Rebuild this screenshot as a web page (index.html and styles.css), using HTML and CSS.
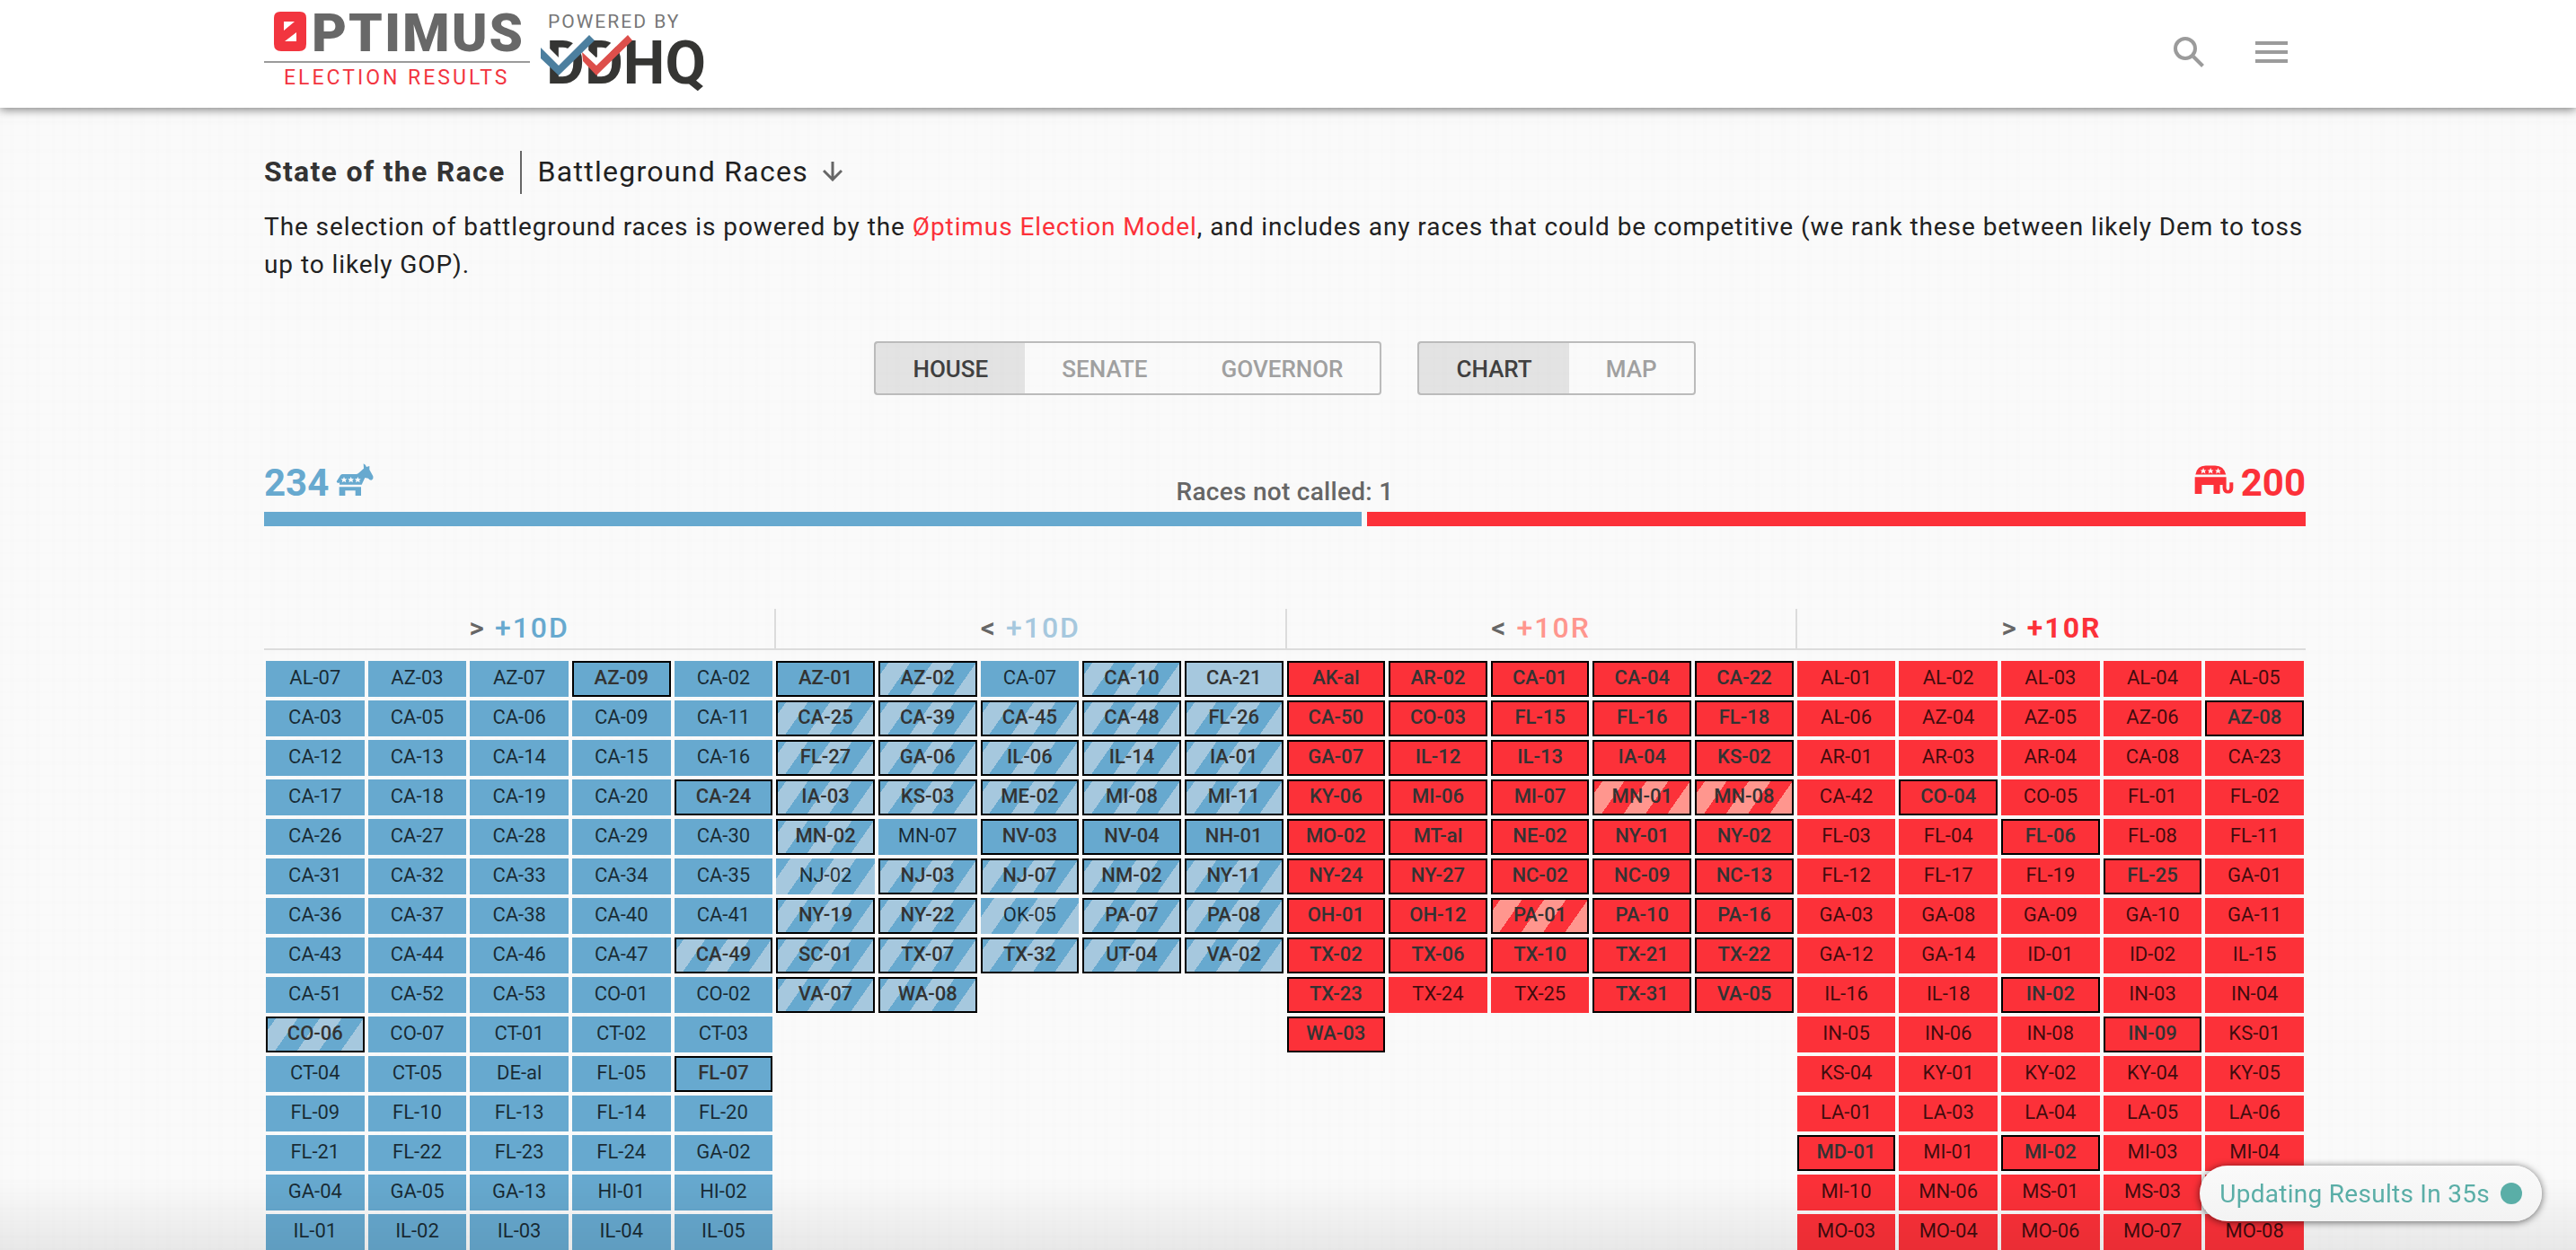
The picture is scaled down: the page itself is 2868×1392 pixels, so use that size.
FILE: index.html
```html
<!DOCTYPE html>
<html lang="en">
<head>
  <meta charset="utf-8">
  <meta name="viewport" content="width=device-width, initial-scale=1">
  <title>Optimus Election Results</title>
  <link rel="stylesheet" href="styles.css">
</head>
<body>
  <header class="site-header">
    <a class="logo" href="#" aria-label="Optimus election results, powered by DDHQ">
      <svg width="492" height="120" viewBox="0 0 492 120">
        <path class="logo-red" fill-rule="evenodd" d="M19 13h22q7 0 7 7v29q0 8-8 8H20q-8 0-8-8V20q0-7 7-7zM23 24v10l12-10zM37 36v10H24z"/>
        <text class="logo-word" x="54" y="57">PTIMUS</text>
        <path class="logo-rule" d="M1 69h296"/>
        <text class="logo-sub" x="23" y="94">ELECTION RESULTS</text>
        <text class="logo-powered" x="317" y="31">POWERED BY</text>
        <text class="logo-ddhq" x="315" y="93">DDHQ</text>
        <path class="check-gap" d="M309 49l20 20 34-34"/>
        <path class="check-gap" d="M357 56l14 13 34-34"/>
        <path class="check-red" d="M355 58l16 15 35-34 5 6-40 39-15-16z"/>
        <path class="check-blue" d="M309 53l20 20 34-34 6 6-40 39-20-19z"/>
      </svg>
    </a>
    <nav class="tools" aria-label="Site">
      <button class="icon-button" type="button" aria-label="Search">
        <svg width="36" height="36" viewBox="0 0 36 36"><circle cx="14" cy="14" r="11"/><path d="M23 23l10.500 10.500"/></svg>
      </button>
      <button class="icon-button" type="button" aria-label="Menu">
        <svg width="36" height="36" viewBox="0 0 36 36"><path d="M0 8h36M0 18h36M0 28h36"/></svg>
      </button>
    </nav>
  </header>

  <main class="page">
    <div class="title-row">
      <h1 class="title">State of the Race</h1>
      <button class="view-picker" type="button">Battleground Races
        <svg width="22" height="22" viewBox="0 0 22 22"><path d="M11 0v20M1 10l10 10 10-10"/></svg>
      </button>
    </div>
    <p class="intro">The selection of battleground races is powered by the <a href="#">Øptimus Election Model</a>, and includes any races that could be competitive (we rank these between likely Dem to toss up to likely GOP).</p>

    <div class="toggles">
      <div class="toggle" role="group" aria-label="Chamber">
        <button type="button" aria-pressed="true">HOUSE</button>
        <button type="button" aria-pressed="false">SENATE</button>
        <button type="button" aria-pressed="false">GOVERNOR</button>
      </div>
      <div class="toggle" role="group" aria-label="Display">
        <button type="button" aria-pressed="true">CHART</button>
        <button type="button" aria-pressed="false">MAP</button>
      </div>
    </div>

    <section aria-label="Seats">
      <div class="scores">
        <div class="score dem">234
          <svg width="42" height="36" viewBox="278 47 126 108">
            <path d="M290 118V111Q284 116 280 108L293 87Q296 83 301 83H345Q350 83 354 79L371 64 370 48Q378 52 380 59L390 56V68L402 90Q404 101 396 103 390 103 386 97L375 95 364 118zM289 126h73v29h-19v-17h-34v17h-20z"/>
            <path class="star" id="star" d="M305 92l3 7h7l-5 5 2 7-7-4-7 4 2-7-5-5h7z"/>
            <use class="star" href="#star" x="23"/><use class="star" href="#star" x="46"/>
          </svg>
        </div>
        <div class="uncalled">Races not called: 1</div>
        <div class="score rep">
          <svg width="44" height="32" viewBox="134 53 131 95">
            <path d="M138 84q5-30 34-30h31q29 0 36 30zM136 92h104v37q0 7 6 7 5 0 5-7v-19h12v19q0 18-17 18-17 0-18-18v-11h-9v30h-21v-30h-39v30h-23z"/>
            <use class="star" href="#star" x="-141" y="-30"/><use class="star" href="#star" x="-117" y="-30"/><use class="star" href="#star" x="-92" y="-30"/>
          </svg>
          200
        </div>
      </div>
      <div class="bar"><span class="bar-dem" style="flex-grow:234"></span><span class="bar-rep" style="flex-grow:200"></span></div>
    </section>

    <section class="chart" aria-label="House races">
      <div class="group"><h2 class="group-head">&gt; <span class="dem">+10D</span></h2><div class="cells" data-group="safeDem"></div></div>
      <div class="group"><h2 class="group-head">&lt; <span class="dem-light">+10D</span></h2><div class="cells" data-group="leanDem"></div></div>
      <div class="group"><h2 class="group-head">&lt; <span class="rep-light">+10R</span></h2><div class="cells" data-group="leanRep"></div></div>
      <div class="group"><h2 class="group-head">&gt; <span class="rep strong">+10R</span></h2><div class="cells" data-group="safeRep"></div></div>
    </section>
  </main>

  <div class="footer-shade"></div>
  <div class="refresh" role="status">Updating Results In 35s<span class="dot"></span></div>
  <script src="races.js"></script>
</body>
</html>
```
FILE: styles.css
```css
:root {
  --dem: #67a9cf;
  --dem-light: #a6c8de;
  --rep: #fc3139;
  --rep-light: #ff968e;
}

* { box-sizing: border-box; }

body {
  margin: 0;
  color: #212121;
  font-family: Roboto, "Liberation Sans", sans-serif;
  background:
    repeating-linear-gradient(90deg, rgba(0, 0, 0, .004) 0 3px, transparent 3px 11px, rgba(0, 0, 0, .004) 11px 16px, transparent 16px 29px),
    repeating-linear-gradient(0deg, rgba(0, 0, 0, .004) 0 2px, transparent 2px 13px, rgba(0, 0, 0, .004) 13px 17px, transparent 17px 31px),
    #fafafa;
}

button {
  font: inherit;
  color: inherit;
  background: none;
  border: 0;
  padding: 0;
  cursor: pointer;
}

a { color: var(--rep); text-decoration: none; }
svg { display: block; }

/* Header */
.site-header {
  position: relative;
  display: flex;
  justify-content: space-between;
  height: 120px;
  padding: 0 321px 0 293px;
  background: #fff;
  box-shadow: 0 2px 10px rgba(0, 0, 0, .5);
}

.tools {
  display: flex;
  align-items: center;
  gap: 56px;
  height: 116px;
}

.icon-button svg { fill: none; stroke: #9b9b9b; stroke-width: 4; }

.logo-red { fill: #f2353f; }
.logo-word { font-size: 60px; font-weight: 900; letter-spacing: 2px; fill: #686868; }
.logo-rule { stroke: #9b9b9b; stroke-width: 2; }
.logo-sub { font-size: 23px; letter-spacing: 3px; fill: #f2353f; }
.logo-powered { font-size: 21px; letter-spacing: 2px; fill: #777; }
.logo-ddhq { font-size: 66px; font-weight: 700; fill: #353533; }
.check-gap { fill: none; stroke: #fff; stroke-width: 7; }
.check-red { fill: #dd4f4b; }
.check-blue { fill: #4c7f9f; }

/* Page */
.page { padding: 48px 301px 0 294px; }

.title-row { display: flex; height: 48px; font-size: 32px; line-height: 46px; letter-spacing: .04em; }

.title {
  margin: 0;
  padding-right: 16px;
  border-right: 2px solid #666;
  font-size: 32px;
  font-weight: 700;
  color: #333;
}

.view-picker {
  display: flex;
  align-items: center;
  gap: 16px;
  height: 46px;
  padding-left: 18px;
  letter-spacing: inherit;
}

.view-picker svg { fill: none; stroke: #666; stroke-width: 3; }

.intro { margin: 16px 0 64px; font-size: 28px; line-height: 42px; letter-spacing: .033em; }

.toggles { display: flex; justify-content: center; gap: 40px; margin-bottom: 73px; }

.toggle {
  display: flex;
  height: 60px;
  border: 2px solid #bbb;
  border-radius: 4px;
  font-size: 26px;
  font-weight: 500;
  color: #a0a0a0;
}

.toggle button { padding: 2px 41px 0; }
.toggle button[aria-pressed="true"] { background: rgba(0, 0, 0, .09); color: #404040; }

/* Seat totals */
.dem { color: var(--dem); }
.dem-light { color: var(--dem-light); }
.rep { color: var(--rep); }
.rep-light { color: var(--rep-light); }

.scores {
  display: grid;
  grid-template-columns: 1fr auto 1fr;
  margin-bottom: 7px;
}

.score { display: flex; align-items: center; gap: 8px; font-size: 42px; font-weight: 700; line-height: 50px; }
.score.rep { justify-content: flex-end; }
.score svg { fill: currentColor; margin-bottom: 8px; }
.star { fill: #fafafa; }
.uncalled { align-self: end; font-size: 28px; font-weight: 500; line-height: 30px; letter-spacing: .01em; color: #666; }

.bar { display: flex; gap: 6px; height: 16px; }
.bar span { flex-basis: 0; }
.bar-dem { background: var(--dem); }
.bar-rep { background: var(--rep); }

/* Race chart */
.chart { display: grid; grid-template-columns: repeat(4, 1fr); margin-top: 92px; }

.group-head {
  height: 46px;
  margin: 0 0 12px;
  border-bottom: 2px solid #dcdcdc;
  font-size: 32px;
  font-weight: 500;
  line-height: 42px;
  letter-spacing: 2px;
  text-align: center;
  color: #666;
}

.group + .group .group-head { border-left: 2px solid #dcdcdc; }
.group-head .strong { font-weight: 700; }

.cells { display: grid; grid-template-columns: repeat(5, 1fr); gap: 4px; padding: 0 2px; }

.race {
  height: 40px;
  padding: 2px;
  border: 0 solid #000;
  font-size: 22px;
  line-height: 34px;
  text-align: center;
  color: rgba(0, 0, 0, .75);
  background: var(--tone);
}

.race.d { --tone: var(--dem); --tint: var(--dem-light); }
.race.r { --tone: var(--rep); --tint: var(--rep-light); }
.race.key { padding: 0; border-width: 2px; font-weight: 500; color: #333; }
.race.flip { background: repeating-linear-gradient(-55deg, var(--tint) 0 20px, var(--tone) 20px 40px); }
.race.lean { background: var(--tint); }

/* Overlays */
.footer-shade {
  position: fixed;
  inset: auto 0 0;
  height: 80px;
  background: linear-gradient(to top, rgba(0, 0, 0, .07), transparent);
  pointer-events: none;
}

.refresh {
  position: fixed;
  right: 38px;
  bottom: 32px;
  display: flex;
  align-items: center;
  gap: 12px;
  height: 62px;
  padding: 0 22px;
  border-radius: 31px;
  font-size: 28px;
  letter-spacing: .01em;
  color: #5aaea7;
  background: linear-gradient(#fafafa, #f3f3f3);
  box-shadow: 0 1px 8px rgba(0, 0, 0, .6);
}

.dot { width: 24px; height: 24px; border-radius: 50%; background: #5aaea7; }
```
FILE: races.js
```js
// Suffixes: * battleground, ! battleground flip, ~ flip, ^ battleground leaning.
const races = {
  safeDem: `AL-07 AZ-03 AZ-07 AZ-09* CA-02 CA-03 CA-05 CA-06 CA-09 CA-11
    CA-12 CA-13 CA-14 CA-15 CA-16 CA-17 CA-18 CA-19 CA-20 CA-24*
    CA-26 CA-27 CA-28 CA-29 CA-30 CA-31 CA-32 CA-33 CA-34 CA-35
    CA-36 CA-37 CA-38 CA-40 CA-41 CA-43 CA-44 CA-46 CA-47 CA-49!
    CA-51 CA-52 CA-53 CO-01 CO-02 CO-06! CO-07 CT-01 CT-02 CT-03
    CT-04 CT-05 DE-al FL-05 FL-07* FL-09 FL-10 FL-13 FL-14 FL-20
    FL-21 FL-22 FL-23 FL-24 GA-02 GA-04 GA-05 GA-13 HI-01 HI-02
    IL-01 IL-02 IL-03 IL-04 IL-05`,
  leanDem: `AZ-01* AZ-02! CA-07 CA-10! CA-21^ CA-25! CA-39! CA-45! CA-48! FL-26!
    FL-27! GA-06! IL-06! IL-14! IA-01! IA-03! KS-03! ME-02! MI-08! MI-11!
    MN-02! MN-07 NV-03* NV-04* NH-01* NJ-02~ NJ-03! NJ-07! NM-02! NY-11!
    NY-19! NY-22! OK-05~ PA-07! PA-08! SC-01! TX-07! TX-32! UT-04! VA-02!
    VA-07! WA-08!`,
  leanRep: `AK-al* AR-02* CA-01* CA-04* CA-22* CA-50* CO-03* FL-15* FL-16* FL-18*
    GA-07* IL-12* IL-13* IA-04* KS-02* KY-06* MI-06* MI-07* MN-01! MN-08!
    MO-02* MT-al* NE-02* NY-01* NY-02* NY-24* NY-27* NC-02* NC-09* NC-13*
    OH-01* OH-12* PA-01! PA-10* PA-16* TX-02* TX-06* TX-10* TX-21* TX-22*
    TX-23* TX-24 TX-25 TX-31* VA-05* WA-03*`,
  safeRep: `AL-01 AL-02 AL-03 AL-04 AL-05 AL-06 AZ-04 AZ-05 AZ-06 AZ-08*
    AR-01 AR-03 AR-04 CA-08 CA-23 CA-42 CO-04* CO-05 FL-01 FL-02
    FL-03 FL-04 FL-06* FL-08 FL-11 FL-12 FL-17 FL-19 FL-25* GA-01
    GA-03 GA-08 GA-09 GA-10 GA-11 GA-12 GA-14 ID-01 ID-02 IL-15
    IL-16 IL-18 IN-02* IN-03 IN-04 IN-05 IN-06 IN-08 IN-09* KS-01
    KS-04 KY-01 KY-02 KY-04 KY-05 LA-01 LA-03 LA-04 LA-05 LA-06
    MD-01* MI-01 MI-02* MI-03 MI-04 MI-10 MN-06 MS-01 MS-03 MS-04
    MO-03 MO-04 MO-06 MO-07 MO-08`
};

const marks = { "*": ["key"], "!": ["key", "flip"], "~": ["flip"], "^": ["key", "lean"] };

for (const box of document.querySelectorAll(".cells")) {
  const party = box.dataset.group.endsWith("Dem") ? "d" : "r";
  for (const code of races[box.dataset.group].split(/\s+/)) {
    const cell = document.createElement("a");
    cell.href = "#" + code.slice(0, 5);
    cell.className = ["race", party, ...(marks[code[5]] || [])].join(" ");
    cell.textContent = code.slice(0, 5);
    box.append(cell);
  }
}
```
